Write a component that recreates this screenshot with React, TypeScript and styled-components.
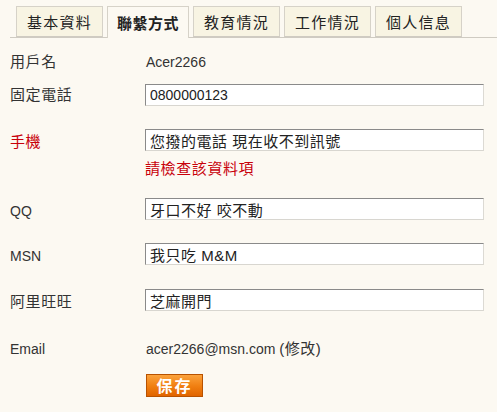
import React from "react";
import styled, { createGlobalStyle } from "styled-components";

const Global = createGlobalStyle`
  html, body { margin: 0; padding: 0; background: #fcf9f2; }
  body {
    font-family: "Liberation Sans", "Noto Sans CJK TC", Arial, sans-serif;
    font-size: 14px;
    color: #333;
  }
`;

const Page = styled.div`
  padding: 6px 13px 0 10px;
  width: 497px;
  box-sizing: border-box;
`;

const TabBar = styled.div`
  display: flex;
  gap: 4px;
  padding-left: 6px;
  border-bottom: 1px solid #cfcbc2;
  height: 31px;
  margin-right: -13px;
`;

const Tab = styled.div<{ $active?: boolean }>`
  box-sizing: border-box;
  height: ${(p) => (p.$active ? "32px" : "31px")};
  padding: 0 ${(p) => (p.$active ? "9px" : "10px")};
  display: flex;
  align-items: center;
  border: 1px solid #d6d2c8;
  border-bottom: ${(p) => (p.$active ? "none" : "1px solid #cfcbc2")};
  background: ${(p) => (p.$active ? "#fcf9f2" : "#f8f4e3")};
  font-weight: ${(p) => (p.$active ? "bold" : "normal")};
  font-size: 15px;
  letter-spacing: ${(p) => (p.$active ? "0.5px" : "1.25px")};
  color: #222;
  cursor: pointer;
`;

const Form = styled.div`
  display: flex;
  flex-direction: column;
  padding-top: 12px;
`;

const Row = styled.div<{ $space: number }>`
  display: grid;
  grid-template-columns: 135px 339px;
  align-items: baseline;
  margin-top: ${(p) => p.$space}px;
  min-height: 22px;
`;

const Label = styled.div<{ $error?: boolean; $cjk?: boolean }>`
  color: ${(p) => (p.$error ? "#c8000a" : "#333")};
  font-size: ${(p) => (p.$cjk ? "15px" : "14px")};
  letter-spacing: ${(p) => (p.$cjk ? "0.6px" : "0")};
`;

const Value = styled.div`
  padding-left: 1px;
  line-height: 22px;
`;

const Zh = styled.span`
  font-size: 15px;
  letter-spacing: 0.5px;
`;

const Field = styled.div`
  display: flex;
  flex-direction: column;
`;

const Input = styled.input<{ $cjk?: boolean }>`
  box-sizing: border-box;
  width: 339px;
  height: 22px;
  margin: 0;
  padding: 0 4px;
  font-family: inherit;
  font-size: ${(p) => (p.$cjk ? "15px" : "14px")};
  color: #222;
  letter-spacing: ${(p) => (p.$cjk ? "0.5px" : "0")};
  background: #fff;
  border: 1px solid;
  border-color: #8a8a8a #dcdad4 #d8d6d0 #8a8a8a;
  outline: none;
`;

const ErrorText = styled.div`
  color: #c8000a;
  font-size: 15px;
  letter-spacing: 0.6px;
  margin-top: 8px;
  line-height: 20px;
`;

const SaveButton = styled.button`
  box-sizing: border-box;
  width: 57px;
  height: 23px;
  margin: 0 0 0 1px;
  padding: 0;
  border: 1px solid #b85200;
  background: linear-gradient(#fba23c, #f07e10 55%, #e06400);
  color: #fff;
  font-family: "Noto Sans CJK TC", sans-serif;
  font-weight: bold;
  font-size: 16px;
  letter-spacing: 2px;
  line-height: 21px;
  cursor: pointer;
`;

const tabs = ["基本資料", "聯繫方式", "教育情況", "工作情況", "個人信息"];

export default function App() {
  return (
    <Page>
      <Global />
      <TabBar>
        {tabs.map((t, i) => (
          <Tab key={t} $active={i === 1}>
            {t}
          </Tab>
        ))}
      </TabBar>
      <Form>
        <Row $space={0}>
          <Label $cjk>用戶名</Label>
          <Value>Acer2266</Value>
        </Row>
        <Row $space={10}>
          <Label $cjk>固定電話</Label>
          <Input defaultValue="0800000123" />
        </Row>
        <Row $space={23}>
          <Label $cjk $error>
            手機
          </Label>
          <Field>
            <Input $cjk defaultValue="您撥的電話 現在收不到訊號" />
            <ErrorText>請檢查該資料項</ErrorText>
          </Field>
        </Row>
        <Row $space={19}>
          <Label>QQ</Label>
          <Input $cjk defaultValue="牙口不好 咬不動" />
        </Row>
        <Row $space={23}>
          <Label>MSN</Label>
          <Input $cjk defaultValue="我只吃 M&M" />
        </Row>
        <Row $space={24}>
          <Label $cjk>阿里旺旺</Label>
          <Input $cjk defaultValue="芝麻開門" />
        </Row>
        <Row $space={27}>
          <Label>Email</Label>
          <Value>
            acer2266@msn.com <Zh>(修改)</Zh>
          </Value>
        </Row>
        <Row $space={14}>
          <span />
          <div>
            <SaveButton>保存</SaveButton>
          </div>
        </Row>
      </Form>
    </Page>
  );
}
